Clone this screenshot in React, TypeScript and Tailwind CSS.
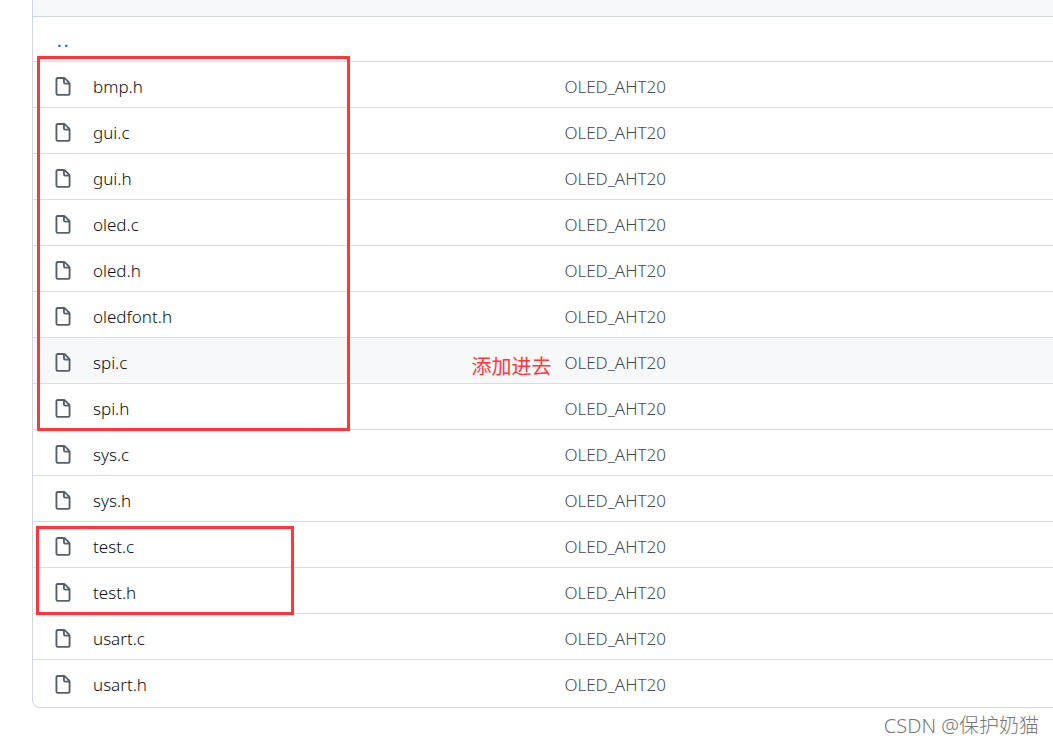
import React from "react";

const commitMessage = "OLED_AHT20";
const hoveredFile = "spi.c";

const files = [
  "bmp.h",
  "gui.c",
  "gui.h",
  "oled.c",
  "oled.h",
  "oledfont.h",
  "spi.c",
  "spi.h",
  "sys.c",
  "sys.h",
  "test.c",
  "test.h",
  "usart.c",
  "usart.h",
];

const FileIcon = () => (
  <svg
    viewBox="0 0 16 16"
    className="size-5 shrink-0 fill-[#57606a]"
    aria-hidden="true"
  >
    <path
      fillRule="evenodd"
      d="M3.75 1.5a.25.25 0 00-.25.25v11.5c0 .138.112.25.25.25h8.5a.25.25 0 00.25-.25V6H9.75A1.75 1.75 0 018 4.25V1.5H3.75zm5.75.56v2.19c0 .138.112.25.25.25h2.19L9.5 2.06zM2 1.75C2 .784 2.784 0 3.75 0h5.086c.464 0 .909.184 1.237.513l3.414 3.414c.329.328.513.773.513 1.237v8.086A1.75 1.75 0 0112.25 15h-8.5A1.75 1.75 0 012 13.25V1.75z"
    />
  </svg>
);

const FileRow = ({ name }: { name: string }) => (
  <tr
    className={`h-[46px] border-t border-[#d8dee4] ${name === hoveredFile ? "bg-[#f6f8fa]" : ""}`}
  >
    <td className="pt-1">
      <div className="flex items-center gap-5 pl-5">
        <FileIcon />
        <a href="#" className="text-[#0b0f14]">
          {name}
        </a>
      </div>
    </td>
    <td className="pt-1 pl-px">
      <a href="#" className="text-[#434b55]">
        {commitMessage}
      </a>
    </td>
  </tr>
);

const App = () => {
  return (
    <div className="overflow-hidden bg-white pl-8 font-['Noto_Sans','Noto_Sans_CJK_SC',sans-serif] text-[17px] leading-6 font-light">
      <div className="relative rounded-bl-lg border-b border-l border-[#d0d7de] pb-px">
        <div className="h-4 bg-[#f6f8fa]" />
        <table className="w-full table-fixed border-collapse">
          <colgroup>
            <col className="w-[52%]" />
            <col />
          </colgroup>
          <tbody>
            <tr className="h-[45px] border-t border-[#d0d7de]">
              <td className="pt-1 pl-6" colSpan={2}>
                <a
                  href="#"
                  aria-label="Parent directory"
                  className="flex gap-0.5 font-medium text-[#0969da]"
                >
                  <span>.</span>
                  <span>.</span>
                </a>
              </td>
            </tr>
            {files.map((file) => (
              <FileRow key={file} name={file} />
            ))}
          </tbody>
        </table>

        {/* Annotations */}
        <div className="pointer-events-none absolute top-14 left-1 h-[375px] w-[313px] border-3 border-[#ff3737]" />
        <div className="pointer-events-none absolute top-[526px] left-[3px] h-[89px] w-[258px] border-3 border-[#ff3737]" />
        <span className="absolute top-[355px] left-[43%] text-[20px] font-normal text-[#ff3737]">
          添加进去
        </span>
      </div>

      {/* Watermark */}
      <div className="pt-1 pr-3.5 pb-1 text-right text-[20px] leading-7 text-[#777777]">
        CSDN @保护奶猫
      </div>
    </div>
  );
};

export default App;
